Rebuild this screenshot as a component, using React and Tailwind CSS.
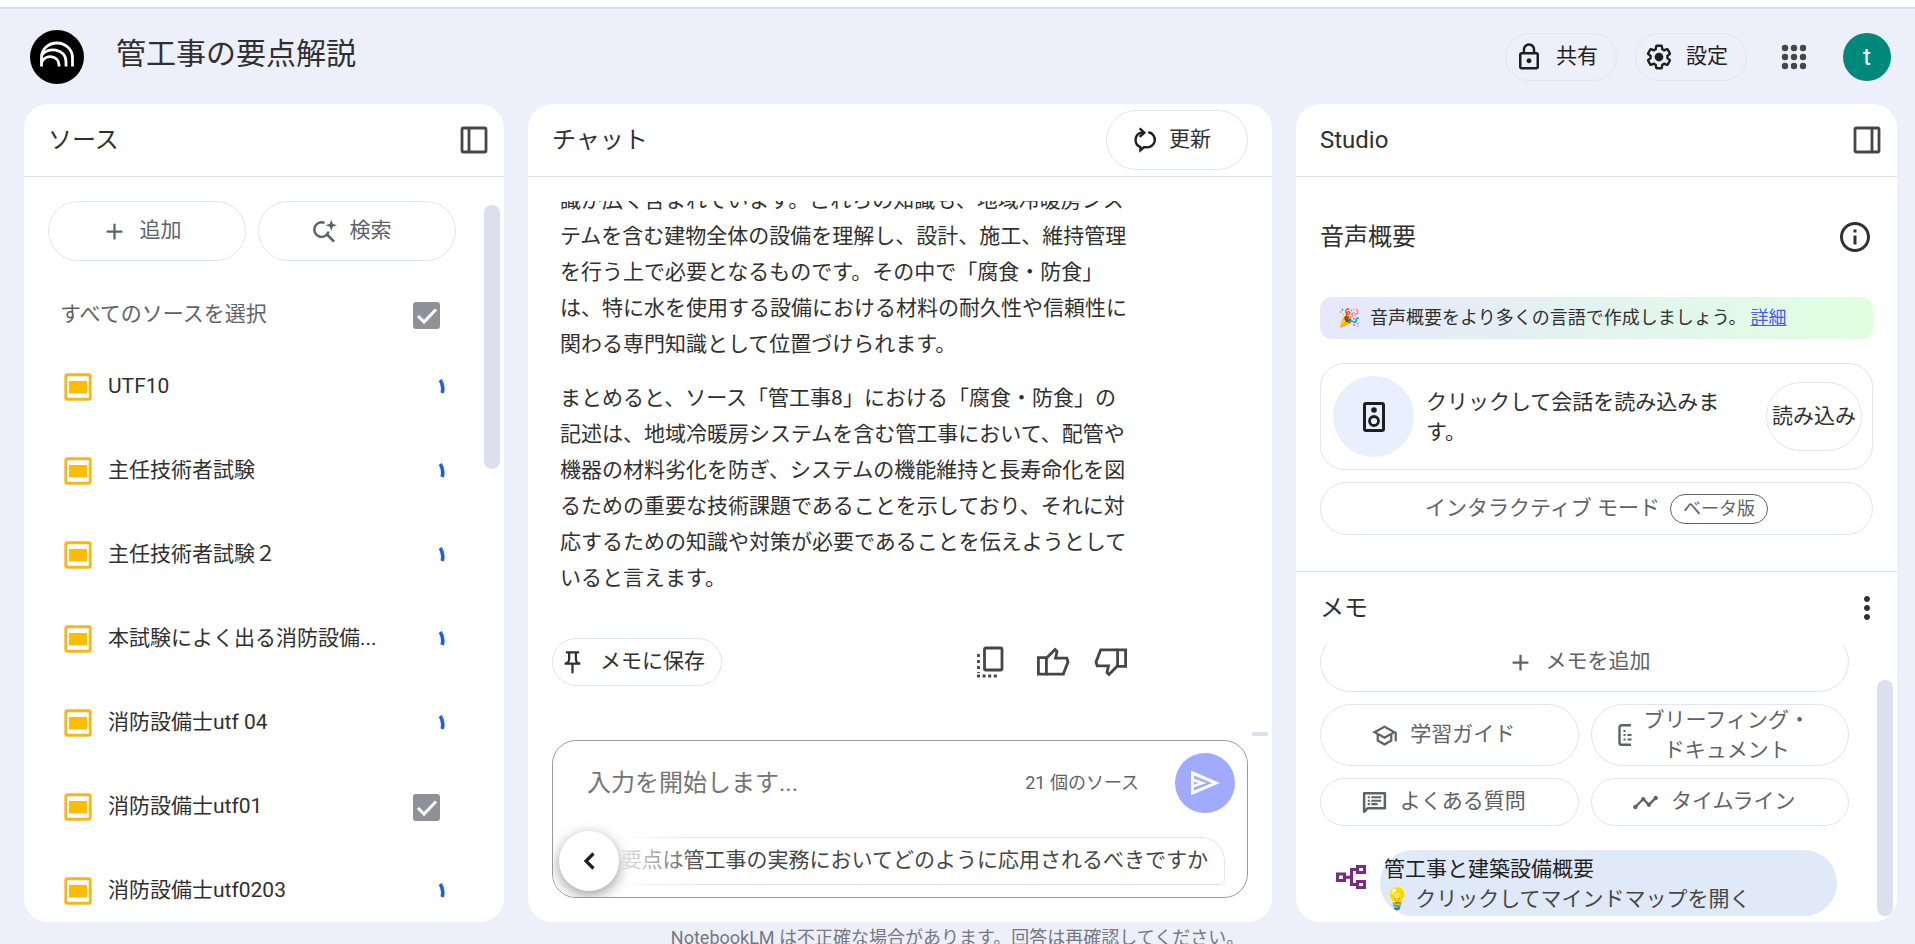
import { useState } from 'react'
import {
  MdAdd,
  MdLockOutline,
  MdMoreVert,
  MdOutlineInfo,
  MdOutlinePushPin,
  MdOutlineSchool,
  MdTimeline
} from 'react-icons/md'

const sources = [
  { name: 'UTF10', loading: true },
  { name: '主任技術者試験', loading: true },
  { name: '主任技術者試験２', loading: true },
  { name: '本試験によく出る消防設備...', loading: true },
  { name: '消防設備士utf 04', loading: true },
  { name: '消防設備士utf01', loading: false },
  { name: '消防設備士utf0203', loading: true }
]

const pill = 'flex items-center justify-center border border-[#e1e4f1] rounded-full'

function Logo() {
  return (
    <svg viewBox="0 0 54 54" className="size-[54px] shrink-0">
      <circle cx="27" cy="27" r="27" fill="#000" />
      <g fill="none" stroke="#fff" strokeWidth="2.8">
        <path d="M11.5 36.5V27.5C11.5 19 18.5 13 27 13S42.500 19.500 42.500 28V36.500" />
        <path d="M11.5 25.5C17 16.5 36 18 36 32V36.5" />
        <path d="M11.5 32.5C16 23.5 29 25.5 29 35V36.5" />
      </g>
    </svg>
  )
}

function PanelIcon({ right }) {
  return (
    <svg viewBox="0 0 28 28" className="size-7" fill="none" stroke="#444746" strokeWidth="2.8">
      <rect x="2" y="2" width="24" height="24" rx="1.5" />
      {right ? <path d="M19 2v24" /> : <path d="M9 2v24" />}
    </svg>
  )
}

function SlidesIcon() {
  return (
    <svg viewBox="0 0 28 28" className="size-7 shrink-0">
      <rect x="1.8" y="1.8" width="24.4" height="24.4" rx="1.5" fill="none" stroke="#f2b824" strokeWidth="2.9" />
      <path d="M5 8h18v12.500H5z" fill="#fbbc04" />
    </svg>
  )
}

function SearchSparkIcon() {
  return (
    <svg viewBox="0 0 24 24" className="size-[27px]">
      <path d="M12 4.300A6.500 6.500 0 1 0 15.700 12" fill="none" stroke="#5f6368" strokeWidth="2.2" />
      <path d="M13.500 14l7 7" stroke="#5f6368" strokeWidth="2.4" />
      <path d="M18 1.500l1.300 3.700 3.700 1.300-3.700 1.300L18 11.500l-1.300-3.700L13 6.500l3.700-1.300z" fill="#5f6368" />
    </svg>
  )
}

function RefreshIcon() {
  return (
    <svg viewBox="0 0 24 24" className="size-[26px]" fill="none" stroke="#1f1f1f" strokeWidth="2.2">
      <path d="M12 5.200H9.500A7 7 0 0 0 8.700 18.500V21.500L12 18.700H14A7 7 0 0 0 16 4.800" />
      <path d="M8 1.200l4.300 4L8 9.200" />
    </svg>
  )
}

function GearIcon() {
  return (
    <svg viewBox="0 0 24 24" className="size-[30px]">
      <g transform="translate(1.200 1.200) scale(.9)">
        <path
          fill="none"
          stroke="currentColor"
          strokeWidth="2.1"
          d="M19.430 12.980c.04-.32.07-.64.07-.98 0-.34-.03-.66-.07-.98l2.110-1.650c.19-.15.24-.42.12-.64l-2-3.460a.5.5 0 0 0-.61-.22l-2.490 1c-.52-.4-1.080-.73-1.690-.98l-.38-2.650A.488.488 0 0 0 14 2h-4c-.25 0-.46.18-.49.42l-.38 2.650c-.61.25-1.170.59-1.690.98l-2.490-1a.566.566 0 0 0-.18-.03c-.17 0-.34.09-.43.25l-2 3.460c-.13.22-.07.49.12.64l2.110 1.650c-.04.32-.07.65-.07.98 0 .33.03.66.07.98l-2.110 1.650c-.19.15-.24.42-.12.64l2 3.460a.5.5 0 0 0 .61.22l2.490-1c.52.4 1.080.73 1.690.98l.38 2.650c.03.24.24.42.49.42h4c.25 0 .46-.18.49-.42l.38-2.650c.61-.25 1.170-.59 1.690-.98l2.490 1c.06.02.12.03.18.03.17 0 .34-.09.43-.25l2-3.460c.12-.22.07-.49-.12-.64l-2.110-1.650z"
        />
      </g>
      <circle cx="12" cy="12" r="3.500" fill="currentColor" />
    </svg>
  )
}

function CopyIcon() {
  return (
    <svg viewBox="0 0 28 32" className="w-7 h-8" fill="none" stroke="#444746" strokeWidth="2.8">
      <rect x="8.500" y="2" width="17.500" height="22" rx="1.500" />
      <path d="M2.500 8v19" strokeDasharray="3 3" />
      <path d="M1 30h20" strokeDasharray="3 2.6" />
    </svg>
  )
}

function ThumbIcon({ down }) {
  return (
    <svg
      viewBox="0 0 34 30"
      className={down ? 'w-[34px] h-[30px] rotate-180' : 'w-[34px] h-[30px]'}
      fill="none"
      stroke="#444746"
      strokeWidth="2.8"
    >
      <path d="M2.400 10.700h8v16.400h-8z" />
      <path d="M10.400 11.200L19 2.500l2 2-1.500 6.700h11.300l1.200 3.800-4.700 12.100H10.400" />
    </svg>
  )
}

function SendIcon() {
  return (
    <svg viewBox="0 0 30 26" className="w-[30px] h-[26px]">
      <path d="M2.500 3L26 13 2.500 23z" fill="none" stroke="#fff" strokeWidth="3" />
      <path d="M3 9.700l9.500 3.300L3 16.300" fill="none" stroke="#fff" strokeWidth="2.6" />
    </svg>
  )
}

function ChevronLeft() {
  return (
    <svg viewBox="0 0 12 18" className="w-3 h-[18px]" fill="none" stroke="#1f1f1f" strokeWidth="3.2">
      <path d="M10.500 1.500L3 9l7.500 7.500" />
    </svg>
  )
}

function SpeakerIcon() {
  return (
    <svg viewBox="0 0 22 30" className="w-[22px] h-[30px]">
      <rect x="1.500" y="1.500" width="19" height="27" rx="1.500" fill="none" stroke="#1f1f1f" strokeWidth="3" />
      <circle cx="11" cy="8" r="2.800" fill="#1f1f1f" />
      <circle cx="11" cy="19" r="4.500" fill="none" stroke="#1f1f1f" strokeWidth="2.8" />
    </svg>
  )
}

function BriefingIcon() {
  return (
    <svg viewBox="0 0 14 22" className="w-[14px] h-[22px] shrink-0">
      <path d="M13 1.200H3.500a2 2 0 0 0-2 2v15.600a2 2 0 0 0 2 2H13" fill="none" stroke="#5f6368" strokeWidth="2.4" />
      <path d="M5.500 6h2v2h-2zM5.500 10h2v2h-2zM5.500 14.500h2v2h-2zM9.500 10h4v2h-4zM9.500 14.500h4v2h-4z" fill="#5f6368" />
    </svg>
  )
}

function FaqIcon() {
  return (
    <svg viewBox="-1 -1 26 26" className="size-[27px] shrink-0">
      <path d="M2 21V3h20v14.500H5.500z" fill="none" stroke="#5f6368" strokeWidth="2.4" strokeLinejoin="round" />
      <path d="M5.500 6h2v2h-2zM5.500 9.300h2v2h-2zM5.500 12.600h2v2h-2zM9 6h9.500v2H9zM9 9.300h9.500v2H9zM9 12.600h6v2H9z" fill="#5f6368" />
    </svg>
  )
}

function MindMapIcon() {
  return (
    <svg viewBox="0 0 30 24" className="mt-[15px] w-[30px] h-6 shrink-0" fill="none" stroke="#7b2a7f" strokeWidth="3">
      <rect x="1.500" y="9" width="7" height="6.500" />
      <rect x="21.500" y="1.500" width="7" height="6" />
      <rect x="21.500" y="16.500" width="7" height="6" />
      <path d="M8.500 12.200h7M21.500 4.500H15.500v15h6" />
    </svg>
  )
}

function AppsIcon() {
  return (
    <svg viewBox="0 0 26 26" className="size-[26px]" fill="#444746">
      {[4, 13, 22].map((y) => [4, 13, 22].map((x) => <circle key={`${x}-${y}`} cx={x} cy={y} r="3.2" />))}
    </svg>
  )
}

function Spinner() {
  return (
    <svg viewBox="0 0 8 16" className="w-2 h-4" fill="none" stroke="#1a62d8" strokeWidth="3.6">
      <path d="M2.200 1C5 5 5.300 9.500 4.200 14" />
    </svg>
  )
}

function Checkbox({ label, id }) {
  const [checked, setChecked] = useState(true)
  return (
    <span className="relative flex size-[27px] shrink-0">
      <input
        id={id}
        type="checkbox"
        aria-label={label}
        checked={checked}
        onChange={(e) => setChecked(e.target.checked)}
        className="size-full appearance-none rounded-[3px] border-2 border-[#8f9199] checked:bg-[#8f9199]"
      />
      {checked && (
        <svg viewBox="0 0 27 27" className="absolute inset-0 pointer-events-none" fill="none" stroke="#fff" strokeWidth="3">
          <path d="M5 14l6 6L23 7.500" />
        </svg>
      )}
    </span>
  )
}

function PanelHeader({ title, children }) {
  return (
    <div className="flex h-[73px] shrink-0 items-center justify-between border-b border-[#dde1eb] pl-6">
      <h2 className="text-2xl">{title}</h2>
      {children}
    </div>
  )
}

function Sources() {
  return (
    <section className="flex min-h-0 flex-col overflow-hidden rounded-3xl bg-white">
      <PanelHeader title="ソース">
        <button aria-label="ソースパネルを閉じる" className="mr-4"><PanelIcon /></button>
      </PanelHeader>
      <div className="flex min-h-0 flex-1 justify-between pr-1">
        <div className="min-w-0 flex-1 overflow-hidden pl-6 pr-7 pt-6">
          <div className="grid grid-cols-2 gap-3 text-[#5f6368]">
            <button className={`${pill} h-[60px] gap-3 pr-3`}><MdAdd className="size-[27px]" />追加</button>
            <button className={`${pill} h-[60px] gap-3 pr-3`}><SearchSparkIcon />検索</button>
          </div>
          <div className="mt-6 flex h-[60px] items-center justify-between pl-3 pr-4 text-[#5f6368]">
            <label htmlFor="all">すべてのソースを選択</label>
            <Checkbox id="all" />
          </div>
          <ul>
            {sources.map((s) => (
              <li key={s.name} className="flex h-[84px] items-center justify-between pl-4 pr-2.5">
                <div className="flex min-w-0 items-center gap-4">
                  <SlidesIcon />
                  <span className="truncate">{s.name}</span>
                </div>
                {s.loading ? <Spinner /> : <span className="mr-1.5"><Checkbox label={s.name} /></span>}
              </li>
            ))}
          </ul>
        </div>
        <div className="mt-7 h-[264px] w-4 shrink-0 rounded-full bg-[#dce0ec]" />
      </div>
    </section>
  )
}

function Chat() {
  const [text, setText] = useState('')
  return (
    <section className="flex min-h-0 flex-col overflow-hidden rounded-3xl bg-white">
      <PanelHeader title="チャット">
        <button className={`${pill} mr-6 h-[60px] gap-3 px-6 pr-9`}><RefreshIcon />更新</button>
      </PanelHeader>
      <div className="mt-6 flex min-h-0 flex-1 items-end overflow-hidden">
        <div className="flex-1 pb-[54px] pl-6">
          <div className="w-[586px] space-y-[18px] px-2 leading-9">
            <p>
              識が広く含まれています。これらの知識も、地域冷暖房システムを含む建物全体の設備を理解し、設計、施工、維持管理を行う上で必要となるものです。その中で「腐食・防食」は、特に水を使用する設備における材料の耐久性や信頼性に関わる専門知識として位置づけられます。
            </p>
            <p>
              まとめると、ソース「管工事8」における「腐食・防食」の記述は、地域冷暖房システムを含む管工事において、配管や機器の材料劣化を防ぎ、システムの機能維持と長寿命化を図るための重要な技術課題であることを示しており、それに対応するための知識や対策が必要であることを伝えようとしていると言えます。
            </p>
          </div>
          <div className="mt-[42px] flex w-[576px] items-center justify-between">
            <button className={`${pill} h-12 gap-3.5 pl-1.5 pr-4`}><MdOutlinePushPin className="size-[27px]" />メモに保存</button>
            <div className="flex items-center gap-6 text-[#444746]">
              <button aria-label="コピー" className="mr-2"><CopyIcon /></button>
              <button aria-label="良い回答"><ThumbIcon /></button>
              <button aria-label="良くない回答"><ThumbIcon down /></button>
            </div>
          </div>
        </div>
        <div className="mb-1 mr-1 h-1 w-4 rounded-sm bg-[#dce0ec]" />
      </div>
      <div className="relative mx-6 mb-6 h-[158px] shrink-0 overflow-hidden rounded-3xl border border-[#9a9a9a]">
        <div className="flex items-center pl-[34px] pr-3 pt-3">
          <input
            value={text}
            onChange={(e) => setText(e.target.value)}
            aria-label="入力を開始します"
            placeholder="入力を開始します..."
            className="h-[60px] min-w-0 flex-1 text-2xl outline-none placeholder:text-[#757575]"
          />
          <span className="text-lg text-[#5f6368]">21 個のソース</span>
          <button aria-label="送信" className="ml-9 flex size-[60px] items-center justify-center rounded-full bg-[#a0aaff]">
            <SendIcon />
          </button>
        </div>
        <div className="mt-6 flex justify-end pr-[22px]">
          <button className="h-12 shrink-0 whitespace-nowrap rounded-t-3xl rounded-br-md rounded-bl-3xl border border-[#e1e4ea] px-4 text-[#444746]">
            要点は管工事の実務においてどのように応用されるべきですか
          </button>
        </div>
        <div className="absolute bottom-0 left-0 flex h-[72px] w-[150px] items-center bg-linear-to-r from-white from-40% to-transparent pl-1.5">
          <button aria-label="前へ" className="flex size-[60px] items-center justify-center rounded-full bg-white shadow-[0_4px_14px_rgba(0,0,0,0.4)]">
            <ChevronLeft />
          </button>
        </div>
      </div>
    </section>
  )
}

function Studio() {
  return (
    <section className="flex min-h-0 flex-col overflow-hidden rounded-3xl bg-white">
      <PanelHeader title="Studio">
        <button aria-label="Studio パネルを閉じる" className="mr-4"><PanelIcon right /></button>
      </PanelHeader>
      <div className="shrink-0 border-b border-[#dde1eb] px-6 pb-9">
        <div className="flex h-[120px] items-center justify-between">
          <h3 className="text-2xl">音声概要</h3>
          <button aria-label="情報"><MdOutlineInfo className="size-9" /></button>
        </div>
        <p className="flex h-[42px] items-center rounded-xl bg-linear-to-r from-[#e6e7fd] to-[#e0ffe0] px-[18px] text-lg">
          <span className="w-8">🎉</span>音声概要をより多くの言語で作成しましょう。
          <a href="#" className="ml-1 text-[#4a5df0] underline">詳細</a>
        </p>
        <div className="mt-6 flex h-[107px] items-center rounded-3xl border border-[#e1e4ea] pl-3 pr-2.5">
          <div className="flex size-[81px] shrink-0 items-center justify-center rounded-full bg-[#e9f0fd]"><SpeakerIcon /></div>
          <p className="ml-3 flex-1 pr-10 leading-[30px]">クリックして会話を読み込みます。</p>
          <button className={`${pill} h-[69px] w-24 shrink-0`}>読み込み</button>
        </div>
        <button className={`${pill} mt-3 h-[53px] w-full gap-2.5 text-[#5f6368]`}>
          インタラクティブ モード
          <span className="flex h-[30px] items-center rounded-full border border-[#5f6368] px-3 text-lg">ベータ版</span>
        </button>
      </div>
      <div className="flex h-[72px] shrink-0 items-center justify-between pl-6 pr-3">
        <h3 className="text-2xl">メモ</h3>
        <button aria-label="その他"><MdMoreVert className="size-9" /></button>
      </div>
      <div className="flex min-h-0 flex-1 items-end justify-between overflow-hidden pb-1.5 pr-1">
        <div className="flex-1 pl-6 pr-7 text-[#5f6368]">
          <button className={`${pill} h-[60px] w-full gap-3 pr-3`}><MdAdd className="size-[27px]" />メモを追加</button>
          <div className="mt-3 grid grid-cols-2 gap-3">
            <button className={`${pill} h-[62px] gap-3 pr-3`}><MdOutlineSchool className="size-[27px]" />学習ガイド</button>
            <button className={`${pill} h-[62px] gap-3 pr-3 leading-[30px]`}><BriefingIcon /><span>ブリーフィング・<br />ドキュメント</span></button>
            <button className={`${pill} h-12 gap-3 pr-3`}><FaqIcon />よくある質問</button>
            <button className={`${pill} h-12 gap-3 pr-3`}><MdTimeline className="size-[27px]" />タイムライン</button>
          </div>
          <div className="mt-6 flex items-start gap-3.5 pl-4 pr-3">
            <MindMapIcon />
            <a href="#" className="h-[66px] flex-1 rounded-full bg-[#e0e9f8] pl-1 leading-[30px] text-[#444746]">
              <span className="block pt-1 text-[#1f1f1f]">管工事と建築設備概要</span>
              <span className="block">💡 クリックしてマインドマップを開く</span>
            </a>
          </div>
        </div>
        <div className="h-[236px] w-4 shrink-0 rounded-full bg-[#dce0ec]" />
      </div>
    </section>
  )
}

export default function App() {
  return (
    <div className="flex h-screen flex-col overflow-hidden bg-[#edeffa] font-[Roboto,'Noto_Sans_CJK_JP',sans-serif] text-[21px] text-[#303030]">
      <div className="h-[9px] shrink-0 border-b-2 border-[#dadeeb] bg-white" />
      <header className="flex h-[95px] shrink-0 items-center pl-[30px] pr-6">
        <Logo />
        <h1 className="ml-8 flex-1 pb-1.5 text-3xl">管工事の要点解説</h1>
        <div className="flex items-center text-[#1f1f1f]">
          <button className={`${pill} h-12 gap-3 pl-2 pr-[18px]`}><MdLockOutline className="size-[30px]" />共有</button>
          <button className={`${pill} ml-[18px] h-12 gap-3 pl-2 pr-[18px]`}><GearIcon />設定</button>
          <button aria-label="アプリ" className="ml-[34px]"><AppsIcon /></button>
          <button aria-label="アカウント" className="ml-9 flex size-12 items-center justify-center rounded-full bg-[#00897b] text-2xl text-white">t</button>
        </div>
      </header>
      <main className="grid min-h-0 flex-1 grid-cols-[480fr_744fr_601fr] grid-rows-1 gap-6 pl-6 pr-[18px]">
        <Sources />
        <Chat />
        <Studio />
      </main>
      <footer className="h-[22px] shrink-0 overflow-visible whitespace-nowrap text-center text-lg leading-8 text-[#757780]">
        NotebookLM は不正確な場合があります。回答は再確認してください。
      </footer>
    </div>
  )
}
